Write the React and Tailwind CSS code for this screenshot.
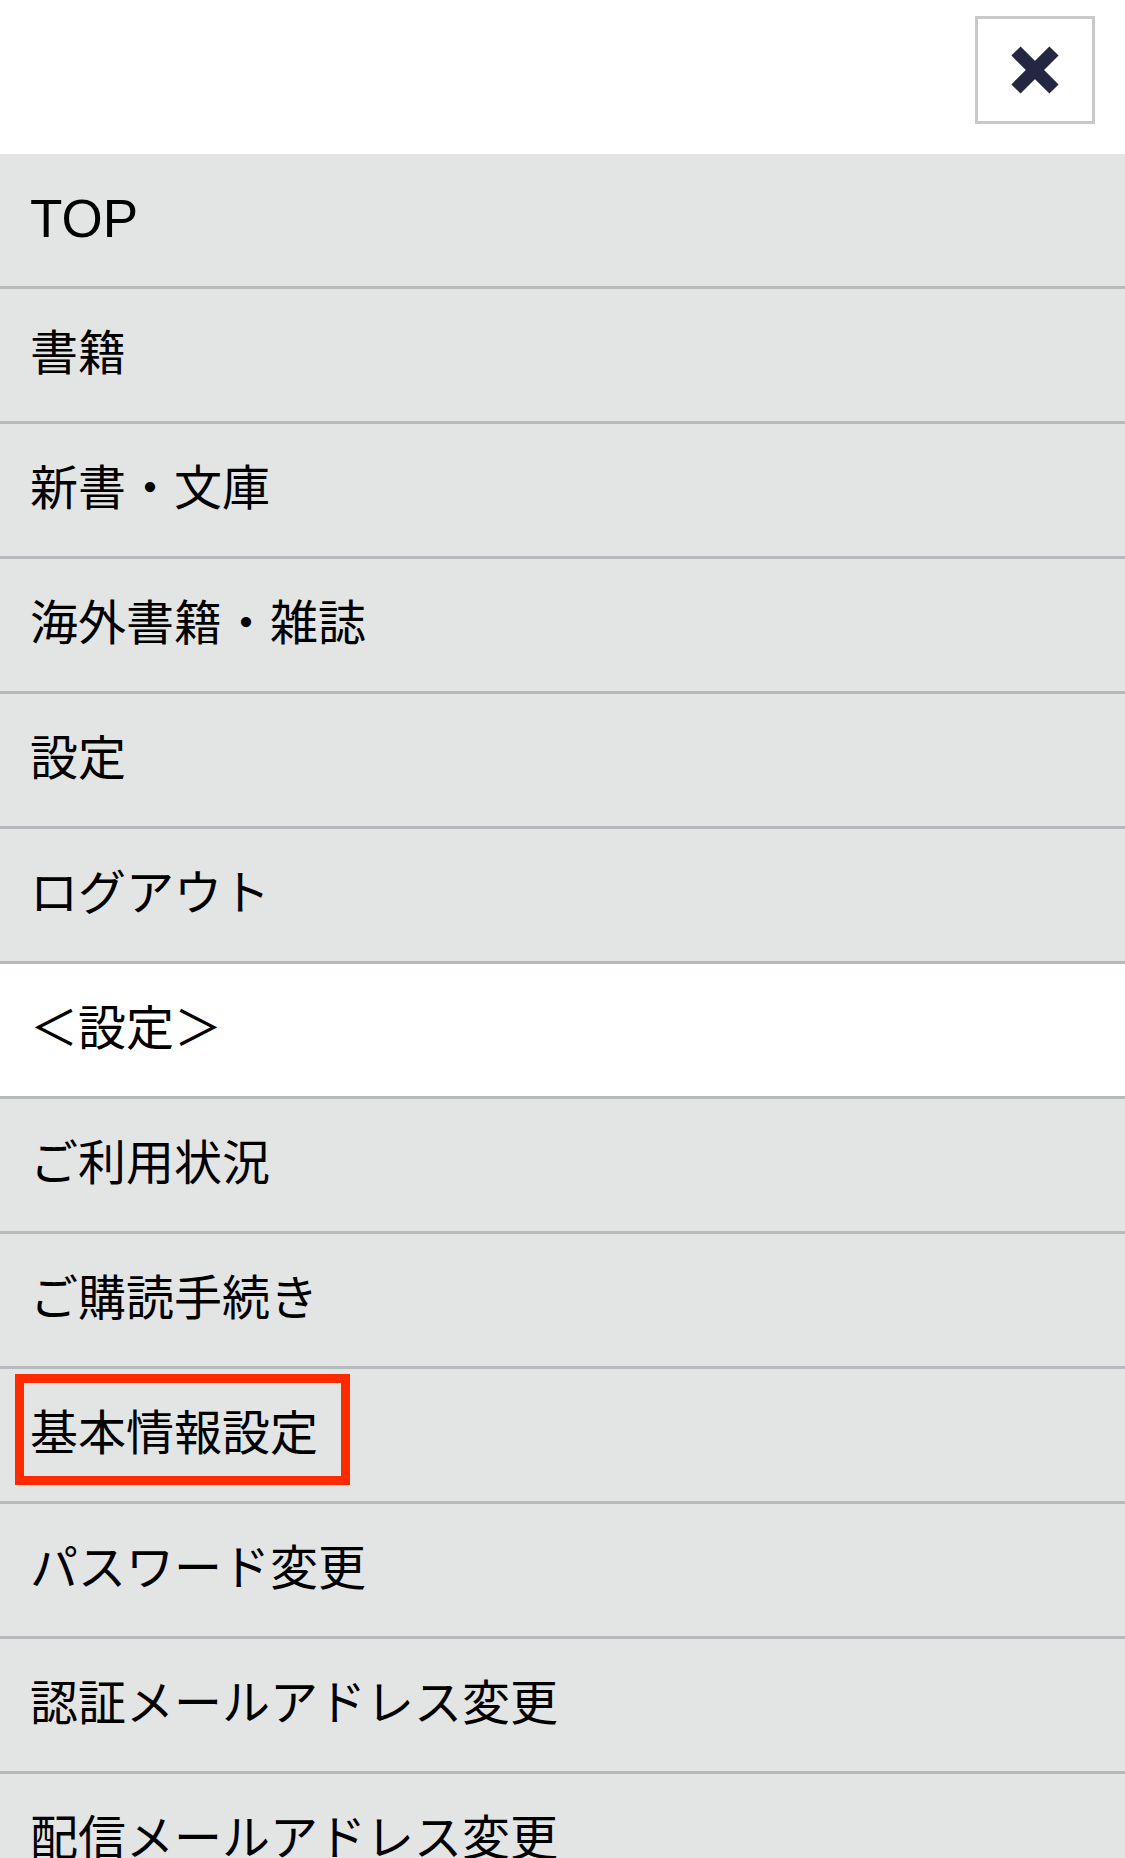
import React from "react";

const items = [
  { label: "TOP", latin: true },
  { label: "書籍" },
  { label: "新書・文庫" },
  { label: "海外書籍・雑誌" },
  { label: "設定" },
  { label: "ログアウト" },
  { label: "＜設定＞", heading: true },
  { label: "ご利用状況" },
  { label: "ご購読手続き" },
  { label: "基本情報設定", marked: true },
  { label: "パスワード変更" },
  { label: "認証メールアドレス変更" },
  { label: "配信メールアドレス変更" },
];

function CloseIcon() {
  return (
    <svg width="48" height="48" viewBox="0 0 48 48" fill="none">
      <path d="M5 5 L43 43 M43 5 L5 43" stroke="#232741" strokeWidth="13" strokeLinecap="butt" />
    </svg>
  );
}

export default function App() {
  return (
    <div
      className="w-[1125px] h-[1858px] overflow-hidden bg-white text-black"
      style={{ fontFamily: '"Liberation Sans", "Noto Sans CJK JP", sans-serif' }}
    >
      {/* Header */}
      <header className="h-[154px] flex justify-end items-start pt-[16px] pr-[30px] bg-white">
        <button className="w-[120px] h-[108px] border-[3px] border-[#c8c9ca] bg-white flex items-center justify-center">
          <CloseIcon />
        </button>
      </header>

      {/* Menu */}
      <nav className="flex flex-col">
        {items.map((item) => (
          <div
            key={item.label}
            className={`relative h-[135px] shrink-0 flex items-center pl-[30px] border-b-[3px] border-[#b7babc] leading-none ${
              item.heading ? "bg-white" : "bg-[#e3e4e4]"
            } ${item.latin ? "text-[53px]" : "text-[48px]"}`}
          >
            <span className="pb-[3px]">{item.label}</span>
            {item.marked && (
              <span className="absolute left-[15px] top-[5px] w-[335px] h-[111px] border-[9px] border-[#ff2a00] pointer-events-none" />
            )}
          </div>
        ))}
      </nav>
    </div>
  );
}
